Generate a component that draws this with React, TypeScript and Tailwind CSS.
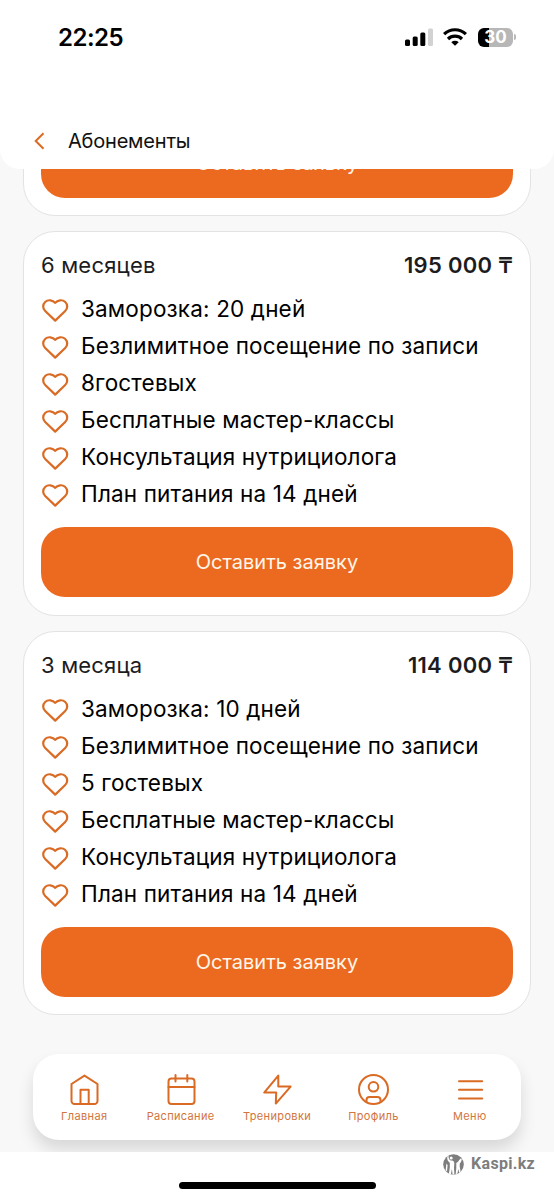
import type { ReactNode } from "react";

const plans = [
  {
    title: "6 месяцев",
    price: "195 000 ₸",
    features: [
      "Заморозка: 20 дней",
      "Безлимитное посещение по записи",
      "8гостевых",
      "Бесплатные мастер-классы",
      "Консультация нутрициолога",
      "План питания на 14 дней",
    ],
  },
  {
    title: "3 месяца",
    price: "114 000 ₸",
    features: [
      "Заморозка: 10 дней",
      "Безлимитное посещение по записи",
      "5 гостевых",
      "Бесплатные мастер-классы",
      "Консультация нутрициолога",
      "План питания на 14 дней",
    ],
  },
];

const tabs: { label: string; icon: ReactNode }[] = [
  {
    label: "Главная",
    icon: (
      <>
        <path d="M3.5 11 16.5 2.6 29.5 11v17a3 3 0 0 1-3 3h-20a3 3 0 0 1-3-3Z" />
        <path d="M12.5 31V16.7h8.2V31" />
      </>
    ),
  },
  {
    label: "Расписание",
    icon: (
      <>
        <rect x="3.5" y="5.5" width="26" height="25.5" rx="3" />
        <path d="M3.5 14h26M10.5 2v6.5M22.3 2v6.5" />
      </>
    ),
  },
  {
    label: "Тренировки",
    icon: <path d="M17.3 2.6 3.2 19.6h12L14.8 30.6 29.6 13.6H17.3Z" />,
  },
  {
    label: "Профиль",
    icon: (
      <>
        <circle cx="16.5" cy="16.5" r="14.5" />
        <circle cx="16.5" cy="13.8" r="4.8" />
        <path d="M9.5 29v-2a3 3 0 0 1 3-3h8a3 3 0 0 1 3 3v2" />
      </>
    ),
  },
  {
    label: "Меню",
    icon: <path d="M5 8.2h23.2M5 16.8h23.2M5 25.4h23.2" />,
  },
];

function Heart() {
  return (
    <svg width="28" height="26" viewBox="0 0 28 26" className="mt-[4px] shrink-0" fill="none" stroke="#d96b25" strokeWidth="2.2" strokeLinejoin="round">
      <path d="M14.2 4.9C11.8 1.8 7 1.4 4.4 3.8 1.5 6.5 1.5 10.4 4.2 13L14.2 22.6 24.2 13c2.7-2.6 2.7-6.5-.2-9.2C21.4 1.4 16.6 1.8 14.2 4.9Z" />
    </svg>
  );
}

function RequestButton() {
  return (
    <button className="flex h-[70px] w-full items-center justify-center rounded-3xl bg-[#ec6a1f] text-[20px] text-[#fff6ea]">
      Оставить заявку
    </button>
  );
}

function StatusBar() {
  return (
    <div className="flex h-[74px] items-center justify-between pr-[38px] pl-[58px]">
      <span className="mt-[2px] text-[24px] font-semibold tracking-[-0.5px] text-black">22:25</span>
      <div className="flex items-center">
        <svg width="28" height="19" viewBox="0 0 28 19">
          <rect x="0" y="11.5" width="5" height="6.5" rx="1.5" />
          <rect x="7.7" y="8.5" width="5" height="9.5" rx="1.5" />
          <rect x="15.3" y="4.5" width="5" height="13.5" rx="1.5" />
          <rect x="23" y="0.5" width="5" height="17.5" rx="1.5" fill="#d2d2d2" />
        </svg>
        <svg width="24" height="18" viewBox="0 0 24 18" className="ml-[10px]" fill="none" stroke="#000" strokeWidth="3.2">
          <path d="M1.1 6.2a15.6 15.6 0 0 1 21.8 0" />
          <path d="M5 11a10 10 0 0 1 14 0" />
          <path d="m12 17.8-3.7-3.6a5.4 5.4 0 0 1 7.4 0Z" fill="#000" stroke="none" />
        </svg>
        <div className="ml-[11px] flex h-[19px] w-[35px] items-center justify-center rounded-md bg-[linear-gradient(90deg,#000_32%,#b7b7b7_32%)] text-[17px] leading-[19px] font-bold text-white">
          30
        </div>
        <div className="ml-px h-[6px] w-[2px] rounded-r-full bg-[#b7b7b7]" />
      </div>
    </div>
  );
}

export default function App() {
  return (
    <div className="flex h-[1200px] w-[554px] flex-col overflow-hidden bg-white font-['Inter','Noto_Sans',sans-serif]">
      <div className="bg-[#f8f8f8]">
        <header className="h-[169px] rounded-b-[20px] bg-white">
          <StatusBar />
          <div className="flex h-[133px] items-center pl-[34px]">
            <svg width="11" height="18" viewBox="0 0 11 18" fill="none" stroke="#d96b25" strokeWidth="2">
              <path d="M9.5 1.2 1.7 9l7.8 7.8" />
            </svg>
            <h1 className="ml-[23px] text-[20px] tracking-[-0.2px] text-[#111]">Абонементы</h1>
          </div>
        </header>
      </div>

      <main className="flex h-[983px] flex-col overflow-hidden bg-[#f8f8f8] px-[23px]">
        {/* Карточка, прокрученная под шапку */}
        <div className="-mt-[60px] shrink-0 rounded-[32px] border border-[#e3e3e5] bg-white px-[17px] pt-[18px] pb-[17px]">
          <RequestButton />
        </div>

        {plans.map((plan) => (
          <section
            key={plan.title}
            className="mt-[15px] h-[384.5px] shrink-0 rounded-[32px] border border-[#e3e3e5] bg-white px-[17px] pt-[17.5px]"
          >
            <div className="flex h-8 items-center justify-between text-[22px] tracking-[0.2px] text-[#1c1c1e]">
              <h2>{plan.title}</h2>
              <span className="font-semibold tracking-[0.3px]">{plan.price}</span>
            </div>
            <ul className="mt-[9.2px] mb-[14.8px]">
              {plan.features.map((feature) => (
                <li key={feature} className="flex h-[37px] items-center gap-3 text-[22.5px] tracking-[0.16px] whitespace-nowrap text-black">
                  <Heart />
                  {feature}
                </li>
              ))}
            </ul>
            <RequestButton />
          </section>
        ))}

        <nav className="mx-[10px] mt-[39px] flex h-[86px] shrink-0 justify-between rounded-[26px] bg-white px-[3px] pt-[18.5px] shadow-[0_10px_16px_rgba(0,0,0,0.13)]">
          {tabs.map((tab) => (
            <div key={tab.label} className="flex w-[96.5px] flex-col items-center text-[11px] leading-[16px] tracking-[0.35px] text-[#d2743c]">
              <svg width="33" height="33" viewBox="0 0 33 33" className="ml-px" fill="none" stroke="#d96b25" strokeWidth="2" strokeLinecap="round" strokeLinejoin="round">
                {tab.icon}
              </svg>
              <span className="mt-[2px]">{tab.label}</span>
            </div>
          ))}
        </nav>
      </main>

      <footer className="flex h-12 flex-col">
        <div className="flex h-6 items-center justify-end gap-[7px] pr-[19px] text-[#7d7d7d]">
          <svg width="21" height="21" viewBox="0 0 21 21">
            <circle cx="10.5" cy="10.5" r="10.3" fill="#7d7d7d" />
            <g fill="#fff">
              <circle cx="8.2" cy="4" r="1.5" />
              <path d="M4.3 2.6 5.6 2c-.2 2 .5 3.8 2 4.5h1.6c1.6.3 2 1.5 2.1 3.2l-.3 4.1.4 6.6H9.6L8.900 15l-1 5.300-2-.5.9-6.200V8.800C4.800 7.600 3.900 5.300 4.300 2.600Z" />
              <path d="M17.600 4.400c-1.300 1.200-1.900 2.600-2.800 3.500l-1.500 1.200v5l-.6 6 1.700-.4.9-4.700.9 3.700 1.400-1-.9-5.200.1-3.100c1.300-1.200 1.800-2.600 1.900-4.200Z" />
              <path d="M3.400 9.500 4.600 11 4 17.800l-1.300-1.700Z" />
            </g>
          </svg>
          <span className="font-['Roboto',sans-serif] text-[16px] font-bold tracking-[0.3px]">Kaspi.kz</span>
        </div>
        <div className="mx-auto mt-[6px] h-[7px] w-[197px] rounded-full bg-black" />
      </footer>
    </div>
  );
}
